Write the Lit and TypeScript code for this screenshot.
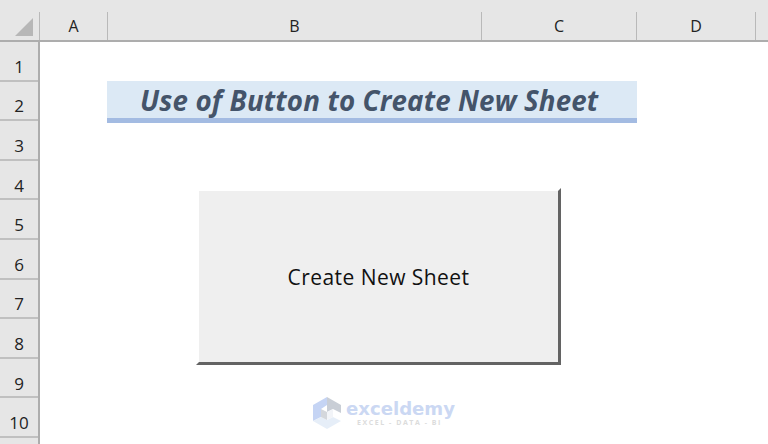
import { LitElement, html, css } from "lit";
import { customElement } from "lit/decorators.js";

const COLS: [string, number][] = [["A", 68], ["B", 374], ["C", 155], ["D", 119], ["", 13]];
const ROWS = ["1", "2", "3", "4", "5", "6", "7", "8", "9", "10", ""];

@customElement("app-root")
export class AppRoot extends LitElement {
  static styles = css`
    :host { display: block; width: 768px; height: 444px; overflow: hidden; position: relative; background: #fff; font-family: "Open Sans", "Noto Sans", sans-serif; color: #222; }
    .top { display: flex; height: 42px; background: #e6e6e6; border-bottom: 2px solid #adadad; box-sizing: border-box; }
    .corner { width: 39px; flex: none; display: flex; align-items: flex-start; }
    .corner svg { display: block; }
    .colh { flex: none; box-sizing: border-box; height: 28px; margin-top: 12px; border-left: 1.5px solid #b9b9b9; display: flex; align-items: center; justify-content: center; font-size: 16px; }
    .body { display: flex; height: 402px; }
    .rows { width: 40px; flex: none; background: #e6e6e6; border-right: 2px solid #adadad; box-sizing: border-box; }
    .rowh { height: 39.6px; box-sizing: border-box; border-bottom: 2px solid #c0c0c0; display: flex; align-items: center; justify-content: center; font-size: 17px; padding-top: 11px; }
    .sheet { flex: 1; padding: 39px 0 0 67px; }
    .title { width: 530px; height: 42px; box-sizing: border-box; background: #dce9f5; border-bottom: 5px solid #a3bbe2; font-weight: 700; font-style: italic; font-size: 27.7px; letter-spacing: 0.15px; color: #44546a; line-height: 39px; padding-left: 33px; white-space: nowrap; }
    .btn { display: flex; align-items: center; justify-content: center; box-sizing: border-box; width: 365px; height: 177px; margin: 65px 0 0 89px; padding: 0; background: #efefef; border: 3px solid; border-color: #fff #636363 #636363 #fff; font: 21px "Open Sans", "Noto Sans", sans-serif; letter-spacing: 0.45px; color: #111; }
    .wm { position: absolute; left: 313px; top: 397px; display: flex; gap: 5px; }
    .wm svg { display: block; }
    .brand { display: flex; flex-direction: column; align-items: flex-start; padding-top: 2px; }
    .name { font: 700 18.1px/20px "DejaVu Sans", sans-serif; color: #cbd8f3; }
    .tag { font: 700 7px/8px "Open Sans", sans-serif; letter-spacing: 1.55px; color: #dcdcdc; white-space: nowrap; margin-left: 11px; }
  `;

  render() {
    return html`
      <div class="top">
        <div class="corner">
          <svg width="39" height="40" viewBox="0 0 39 40"><polygon points="15,36 33,36 33,18" fill="#b7b7b7"/></svg>
        </div>
        ${COLS.map(([c, w]) => html`<div class="colh" style="width:${w}px">${c}</div>`)}
      </div>
      <div class="body">
        <div class="rows">
          ${ROWS.map((r) => html`<div class="rowh">${r}</div>`)}
        </div>
        <div class="sheet">
          <div class="title">Use of Button to Create New Sheet</div>
          <button class="btn">Create New Sheet</button>
        </div>
      </div>
      <div class="wm">
        <svg width="28" height="32" viewBox="0 0 28 32">
          <polygon points="14,0 28,8 28,16 20,12 14,15 14,8" fill="#c9ced6"/>
          <polygon points="14,0 0,8 0,24 8,20 8,12 14,8" fill="#c5d4f4"/>
          <polygon points="0,24 14,32 28,24 20,20 14,23 8,20" fill="#e6eef8"/>
          <polygon points="14,15 20,12 20,20 14,23" fill="#f2f4f8"/>
          <polygon points="8,12 14,15 14,23 8,20" fill="#d4d7dc"/>
        </svg>
        <div class="brand">
          <div class="name">exceldemy</div>
          <div class="tag">EXCEL - DATA - BI</div>
        </div>
      </div>
    `;
  }
}
